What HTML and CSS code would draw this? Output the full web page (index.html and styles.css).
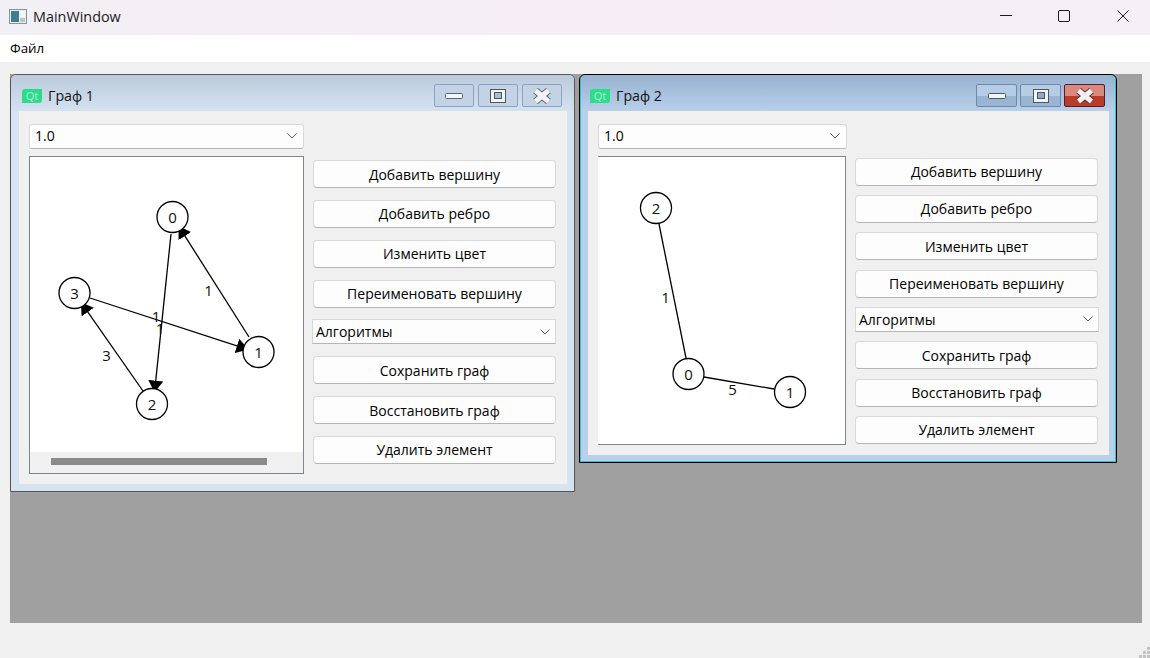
FILE: index.html
```html
<!DOCTYPE html>
<html lang="en">
<head>
    <meta charset="UTF-8">
    <meta name="viewport" content="width=device-width, initial-scale=1.0">
    <title>MainWindow</title>
    <link rel="stylesheet" href="styles.css">
</head>
<body>
    <div class="app">
        <header class="titlebar">
            <svg class="app-icon" width="18" height="15" viewBox="0 0 18 15">
                <rect x="0.5" y="0.5" width="17" height="14" fill="#e8eef0" stroke="#8a9498"/>
                <rect x="2" y="2" width="8" height="11" fill="#3d7f8f"/>
                <rect x="11" y="2" width="5" height="6" fill="#f4f6f4"/>
                <rect x="11" y="9" width="5" height="4" fill="#b9c9bd"/>
            </svg>
            <span class="titlebar-text">MainWindow</span>
            <div class="titlebar-controls">
                <svg width="12" height="12" viewBox="0 0 12 12"><path d="M0 5.5H12" stroke="#1a1a1a" fill="none"/></svg>
                <svg width="12" height="12" viewBox="0 0 12 12"><rect x="0.5" y="0.5" width="11" height="11" rx="1.5" stroke="#1a1a1a" fill="none"/></svg>
                <svg class="titlebar-close" width="12" height="12" viewBox="0 0 12 12"><path d="M0.5 0.5L11.5 11.5M11.5 0.5L0.5 11.5" stroke="#1a1a1a" fill="none"/></svg>
            </div>
        </header>
        <nav class="menubar"><span>Файл</span></nav>

        <main class="workspace">
            <div class="mdi-area">

                <section class="subwindow subwindow-first">
                    <div class="sub-title">
                        <span class="qt-logo">Qt</span>
                        <span class="sub-name">Граф 1</span>
                        <div class="sub-controls">
                            <button class="ctl"><svg width="18" height="8" viewBox="0 0 18 8"><rect x="0.5" y="1.5" width="17" height="5" rx="1" fill="#f2f4f6" stroke="#5a6676"/></svg></button>
                            <button class="ctl"><svg width="18" height="16" viewBox="0 0 18 16"><rect x="1.5" y="1.5" width="15" height="13" fill="#f2f4f6" stroke="#4a5666"/><rect x="5.5" y="4.5" width="7" height="6" fill="#a9bcd2" stroke="#4a5666"/></svg></button>
                            <button class="ctl"><svg width="20" height="16" viewBox="0 0 20 16"><path d="M3.5 2.5L16.5 13.5M16.5 2.5L3.5 13.5" stroke="#5a6674" stroke-width="7"/><path d="M3.5 2.5L16.5 13.5M16.5 2.5L3.5 13.5" stroke="#f1f3f5" stroke-width="5"/></svg></button>
                        </div>
                    </div>
                    <div class="sub-body">
                        <div class="graph-col">
                            <div class="combo"><span>1.0</span><svg class="chevron" width="10" height="6" viewBox="0 0 10 6"><path d="M0.5 0.5L5 5L9.5 0.5" stroke="#555" fill="none"/></svg></div>
                            <div class="graph-view">
                                <svg class="graph" width="273" height="295" viewBox="30 157 273 295">
                                    <defs>
                                        <marker id="arrow" markerUnits="userSpaceOnUse" markerWidth="12" markerHeight="15" refX="12" refY="7.5" orient="auto">
                                            <path d="M0 0L12 7.5L0 15z" fill="#000"/>
                                        </marker>
                                    </defs>
                                    <line class="edge" x1="171" y1="234" x2="154.5" y2="392.6" marker-end="url(#arrow)"/>
                                    <line class="edge" x1="249" y1="337" x2="178.5" y2="225.9" marker-end="url(#arrow)"/>
                                    <line class="edge" x1="90" y1="298" x2="248.4" y2="349.6" marker-end="url(#arrow)"/>
                                    <line class="edge" x1="143" y1="391" x2="80.9" y2="302.2" marker-end="url(#arrow)"/>
                                    <circle class="node" cx="172.5" cy="217" r="15.5"/>
                                    <circle class="node" cx="74.5" cy="293" r="15.5"/>
                                    <circle class="node" cx="258.5" cy="352" r="15.5"/>
                                    <circle class="node" cx="152" cy="404" r="15.5"/>
                                    <text class="label" x="172.5" y="223">0</text>
                                    <text class="label" x="74.5" y="299">3</text>
                                    <text class="label" x="258.5" y="358">1</text>
                                    <text class="label" x="152" y="410">2</text>
                                    <text class="label" x="208.5" y="296">1</text>
                                    <text class="label" x="156" y="322">1</text>
                                    <text class="label" x="160" y="334">1</text>
                                    <text class="label" x="106.5" y="361">3</text>
                                </svg>
                                <div class="hscroll"><div class="hscroll-handle"></div></div>
                            </div>
                        </div>
                        <div class="actions">
                            <button class="btn">Добавить вершину</button>
                            <button class="btn">Добавить ребро</button>
                            <button class="btn">Изменить цвет</button>
                            <button class="btn">Переименовать вершину</button>
                            <div class="combo combo-algo"><span>Алгоритмы</span><svg class="chevron" width="10" height="6" viewBox="0 0 10 6"><path d="M0.5 0.5L5 5L9.5 0.5" stroke="#555" fill="none"/></svg></div>
                            <button class="btn">Сохранить граф</button>
                            <button class="btn">Восстановить граф</button>
                            <button class="btn">Удалить элемент</button>
                        </div>
                    </div>
                </section>

                <section class="subwindow subwindow-second">
                    <div class="sub-title">
                        <span class="qt-logo">Qt</span>
                        <span class="sub-name">Граф 2</span>
                        <div class="sub-controls">
                            <button class="ctl"><svg width="18" height="8" viewBox="0 0 18 8"><rect x="0.5" y="1.5" width="17" height="5" rx="1" fill="#f2f4f6" stroke="#4a5666"/></svg></button>
                            <button class="ctl"><svg width="18" height="16" viewBox="0 0 18 16"><rect x="1.5" y="1.5" width="15" height="13" fill="#f2f4f6" stroke="#4a5666"/><rect x="5.5" y="4.5" width="7" height="6" fill="#8faac6" stroke="#4a5666"/></svg></button>
                            <button class="ctl ctl-close"><svg width="20" height="16" viewBox="0 0 20 16"><path d="M3.5 2.5L16.5 13.5M16.5 2.5L3.5 13.5" stroke="#6e2a2a" stroke-width="7"/><path d="M3.5 2.5L16.5 13.5M16.5 2.5L3.5 13.5" stroke="#f1f3f5" stroke-width="5"/></svg></button>
                        </div>
                    </div>
                    <div class="sub-body">
                        <div class="graph-col">
                            <div class="combo"><span>1.0</span><svg class="chevron" width="10" height="6" viewBox="0 0 10 6"><path d="M0.5 0.5L5 5L9.5 0.5" stroke="#555" fill="none"/></svg></div>
                            <div class="graph-view">
                                <svg class="graph" width="247" height="286" viewBox="598 157 247 286">
                                    <line class="edge" x1="659" y1="224" x2="686" y2="358"/>
                                    <line class="edge" x1="704" y1="377" x2="774" y2="389"/>
                                    <circle class="node" cx="656" cy="208" r="15.5"/>
                                    <circle class="node" cx="688.5" cy="374" r="15.5"/>
                                    <circle class="node" cx="790" cy="392" r="15.5"/>
                                    <text class="label" x="656" y="214">2</text>
                                    <text class="label" x="688.5" y="380">0</text>
                                    <text class="label" x="790" y="398">1</text>
                                    <text class="label" x="665.5" y="303">1</text>
                                    <text class="label" x="732.5" y="395">5</text>
                                </svg>
                            </div>
                        </div>
                        <div class="actions">
                            <button class="btn">Добавить вершину</button>
                            <button class="btn">Добавить ребро</button>
                            <button class="btn">Изменить цвет</button>
                            <button class="btn">Переименовать вершину</button>
                            <div class="combo combo-algo"><span>Алгоритмы</span><svg class="chevron" width="10" height="6" viewBox="0 0 10 6"><path d="M0.5 0.5L5 5L9.5 0.5" stroke="#555" fill="none"/></svg></div>
                            <button class="btn">Сохранить граф</button>
                            <button class="btn">Восстановить граф</button>
                            <button class="btn">Удалить элемент</button>
                        </div>
                    </div>
                </section>

            </div>
            <svg class="grip" width="11" height="11" viewBox="0 0 11 11">
                <path d="M8 0h3v3H8zM4 4h3v3H4zM8 4h3v3H8zM0 8h3v3H0zM4 8h3v3H4zM8 8h3v3H8z" fill="#c4c4c4"/>
            </svg>
        </main>
    </div>
</body>
</html>
```

FILE: styles.css
```css
* {
    box-sizing: border-box;
}

html, body {
    margin: 0;
    height: 100%;
    overflow: hidden;
}

body {
    font-family: "Open Sans", "Noto Sans", Arial, sans-serif;
    font-size: 14px;
    color: #000;
}

.app {
    width: 1150px;
    height: 658px;
    display: flex;
    flex-direction: column;
    background: #f0f0f0;
}

/* window frame */
.titlebar {
    height: 35px;
    display: flex;
    align-items: center;
    padding: 0 0 3px 9px;
    background: linear-gradient(90deg, #f2eff5, #f7edf5 55%, #f5eff6);
}

.app-icon {
    margin-right: 6px;
}

.titlebar-text {
    font-size: 14.4px;
    color: #1a1a1a;
}

.titlebar-controls {
    margin-left: auto;
    display: flex;
    gap: 46px;
    padding-right: 21px;
}

.titlebar-close {
    margin-left: 1px;
}

.menubar {
    height: 27px;
    display: flex;
    align-items: center;
    padding: 0 0 1px 10px;
    background: #fff;
    font-size: 13.4px;
}

.workspace {
    position: relative;
    flex: 1;
    padding: 12px 8px 35px 10px;
}

.mdi-area {
    position: relative;
    height: 100%;
    background: #a0a0a0;
}

.grip {
    position: absolute;
    right: 0;
    bottom: 0;
}

/* sub windows */
.subwindow {
    position: absolute;
    display: flex;
    flex-direction: column;
    border-radius: 6px 6px 0 0;
    border: 1px solid #555;
    background: #d6e4f2;
}

.subwindow-first {
    left: 0;
    top: 0;
    width: 565px;
    height: 418px;
}

.subwindow-second {
    left: 569px;
    top: 0;
    width: 538px;
    height: 389px;
    background: #b8d0ea;
    border-color: #000;
    box-shadow: inset 0 0 0 1px #2cc4dc;
}

.sub-title {
    height: 36px;
    flex: none;
    display: flex;
    align-items: center;
    padding: 5px 12px 0 11px;
    border-radius: 5px 5px 0 0;
    background: linear-gradient(180deg, #bccbdc, #d3e1f0);
}

.subwindow-second .sub-title {
    margin: 0 1px;
    padding: 5px 10px 0 9px;
    background: linear-gradient(180deg, #97b2d0, #b8d0e9);
}

.qt-logo {
    width: 20px;
    height: 14px;
    margin-right: 6px;
    background: #2bdd8a;
    color: #b5f3d3;
    font-size: 11px;
    line-height: 14px;
    text-align: center;
    border-radius: 3px 0 3px 0;
}

.sub-name {
    font-size: 14.2px;
    color: #10141a;
}

.sub-controls {
    margin-left: auto;
    display: flex;
    gap: 4px;
}

.subwindow-second .sub-controls {
    gap: 3px;
}

.ctl {
    width: 40px;
    height: 23px;
    padding: 0;
    display: flex;
    align-items: center;
    justify-content: center;
    border: 1px solid #8ea3bf;
    border-radius: 2px;
    background: #c3d2e4;
}

.subwindow-second .ctl {
    width: 41px;
    border-color: #6f88a8;
    background: linear-gradient(180deg, #b6cce4 50%, #9ab5d1 50%);
}

.subwindow-second .ctl-close {
    border-color: #5a1a28;
    background: linear-gradient(180deg, #d98a7e 50%, #b83c2a 50%);
}

.sub-body {
    flex: 1;
    display: flex;
    margin: 0 7px 7px 8px;
    padding: 13px 11px 10px 10px;
    background: #f0f0f0;
}

.graph-col {
    width: 275px;
    display: flex;
    flex-direction: column;
    gap: 7px;
    margin-right: 9px;
}

.subwindow-second .graph-col {
    width: 249px;
    margin-right: 8px;
}

.combo {
    height: 25px;
    flex: none;
    display: flex;
    align-items: center;
    justify-content: space-between;
    padding: 0 6px 2px 5px;
    background: #fdfdfd;
    border: 1px solid #d9d9d9;
    border-bottom-color: #b5b5b5;
    border-radius: 3px;
}

.combo-algo {
    margin-left: -1px;
    padding: 0 5px 0 3px;
    border-radius: 0;
}

.subwindow-second .combo-algo {
    margin: 0 -1px 0 0;
}

.graph-view {
    flex: 1;
    display: flex;
    flex-direction: column;
    background: #fff;
    border: 1px solid #7f858c;
}

.subwindow-second .graph-view {
    border-left: none;
    margin-right: 1px;
}

.graph {
    display: block;
    flex: none;
}

.edge {
    stroke: #000;
    stroke-width: 1.3;
}

.node {
    fill: #fff;
    stroke: #000;
    stroke-width: 1.3;
}

.label {
    font-size: 15px;
    text-anchor: middle;
    fill: #111;
}

.hscroll {
    flex: 1;
    padding: 6px 36px 0 21px;
    background: #f0f0f0;
}

.hscroll-handle {
    height: 7px;
    background: #8a8a8a;
}

.actions {
    flex: 1;
    display: flex;
    flex-direction: column;
    justify-content: space-between;
    margin: 36px 0 10px;
}

.subwindow-second .actions {
    margin: 33.5px 0 1px;
}

.btn {
    height: 28px;
    flex: none;
    padding: 0;
    font-family: inherit;
    font-size: 14px;
    color: #000;
    background: #fdfdfd;
    border: 1px solid #d9d9d9;
    border-bottom-color: #b5b5b5;
    border-radius: 4px;
}
```
